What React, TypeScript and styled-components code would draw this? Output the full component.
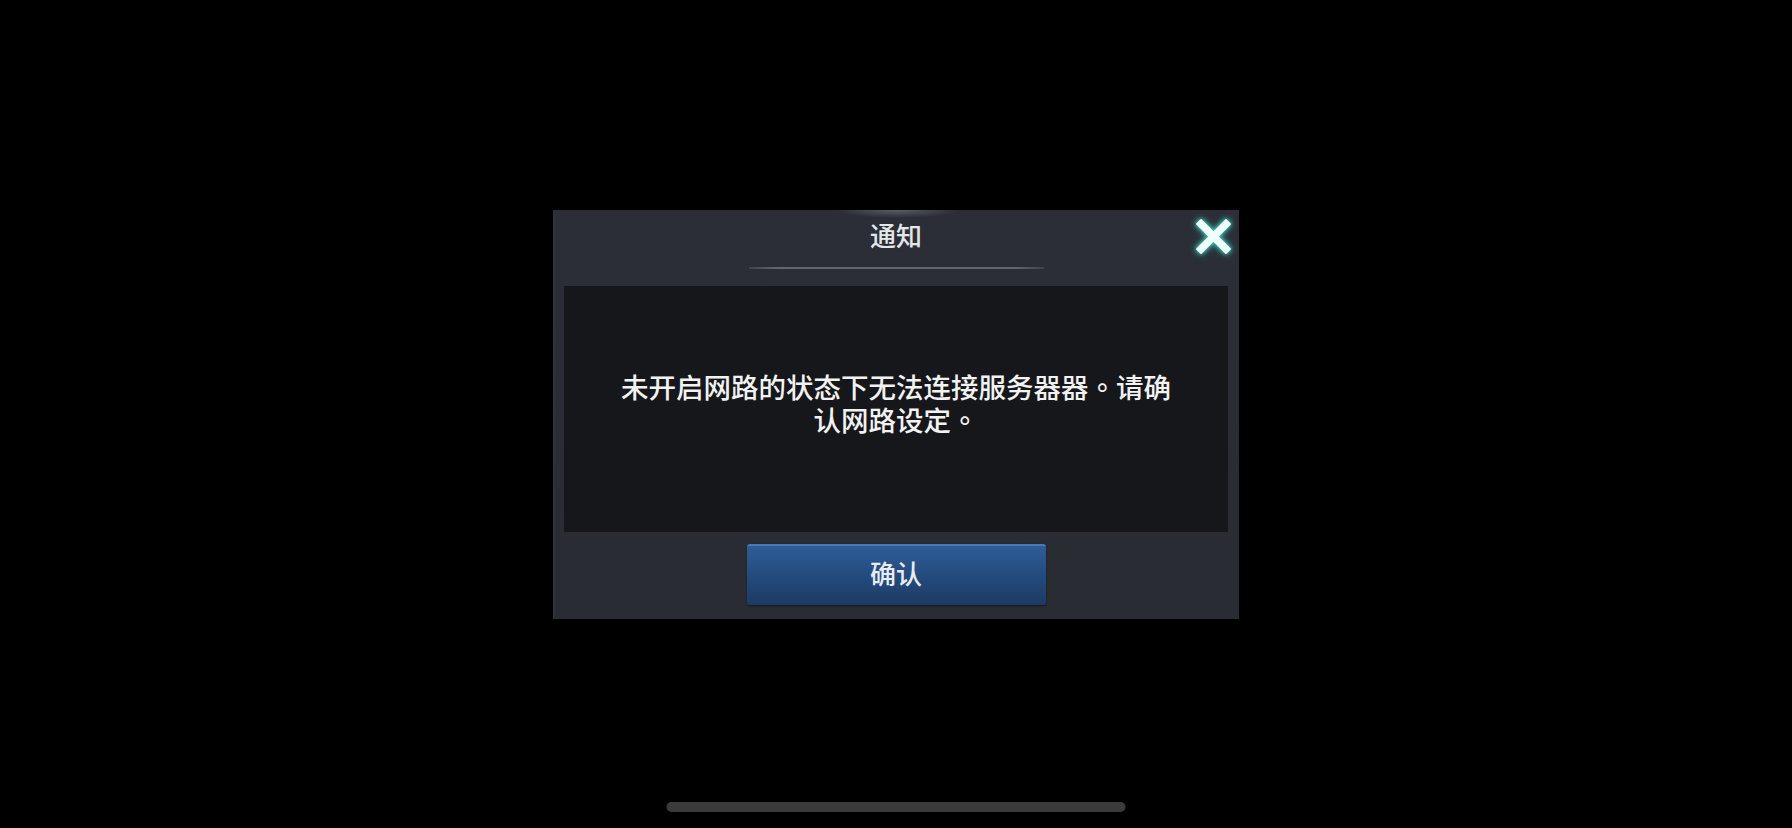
import React from "react";
import styled, { createGlobalStyle } from "styled-components";

const GlobalStyle = createGlobalStyle`
  html, body {
    margin: 0;
    padding: 0;
    background: #000;
  }
  body {
    font-family: "Noto Sans CJK SC", "Noto Sans", sans-serif;
    color: #eef0f2;
  }
`;

const Screen = styled.div`
  width: 100vw;
  height: 100vh;
  display: flex;
  align-items: center;
  justify-content: center;
  background: #000;
  overflow: hidden;
`;

const Dialog = styled.div`
  position: relative;
  width: 686px;
  height: 409px;
  box-sizing: border-box;
  padding: 0 11px 14px 9px;
  display: flex;
  flex-direction: column;
  background:
    radial-gradient(ellipse 60px 8px at 50% 0, rgba(200, 205, 215, 0.3), transparent),
    linear-gradient(180deg, #2b2e36 0%, #2a2c33 100%);
  border-left: 2px solid #30333c;
`;

const Header = styled.div`
  display: flex;
  flex-direction: column;
  align-items: center;
  padding-top: 10px;
  height: 76px;
  box-sizing: border-box;
`;

const Title = styled.div`
  font-size: 26px;
  line-height: 30px;
  font-weight: 500;
  color: #e4e7ea;
`;

const TitleRule = styled.div`
  width: 295px;
  height: 2px;
  margin-top: 17px;
  background: linear-gradient(90deg, #3f434b, #62666e 10%, #62666e 90%, #3f434b);
`;

const CloseButton = styled.button`
  position: absolute;
  top: 9px;
  right: 8px;
  width: 35px;
  height: 35px;
  padding: 0;
  border: none;
  background: none;
  cursor: pointer;
  filter: drop-shadow(0 0 2px #43d6c4) drop-shadow(0 0 3px rgba(60, 200, 190, 0.7));
`;

const Content = styled.div`
  height: 246px;
  box-sizing: border-box;
  padding-bottom: 12px;
  display: flex;
  align-items: center;
  justify-content: center;
  background: #16171b;
`;

const Message = styled.p`
  margin: 0;
  max-width: 566px;
  font-family: "Noto Sans CJK TC", "Noto Sans CJK SC", sans-serif;
  font-size: 27.5px;
  line-height: 33px;
  font-weight: 500;
  text-align: center;
  color: #f2f2f2;
`;

const Footer = styled.div`
  flex: 1;
  display: flex;
  align-items: flex-end;
  justify-content: center;
`;

const ConfirmButton = styled.button`
  width: 299px;
  height: 61px;
  padding: 0 0 5px;
  border: none;
  border-top: 2px solid #4a79b6;
  border-radius: 3px;
  background: linear-gradient(180deg, #2f5c96 0%, #244b7e 50%, #1c3b64 100%);
  box-shadow: 0 1px 2px rgba(0, 0, 0, 0.5);
  font-family: "Noto Sans CJK SC", "Noto Sans", sans-serif;
  font-size: 26px;
  font-weight: 500;
  color: #e8ecf0;
  cursor: pointer;
`;

const HomeIndicator = styled.div`
  position: absolute;
  left: 50%;
  bottom: 16px;
  transform: translateX(-50%);
  width: 459px;
  height: 10px;
  border-radius: 5px;
  background: #3b3b3b;
`;

const CloseIcon = () => (
  <svg width="35" height="35" viewBox="0 0 35 35">
    <path
      d="M5 5 L30 30 M30 5 L5 30"
      stroke="#effffb"
      strokeWidth="7.5"
      strokeLinecap="square"
    />
  </svg>
);

export default function App() {
  return (
    <>
      <GlobalStyle />
      <Screen>
        <Dialog>
          <Header>
            <Title>通知</Title>
            <TitleRule />
          </Header>
          <CloseButton aria-label="关闭">
            <CloseIcon />
          </CloseButton>
          <Content>
            <Message>未开启网路的状态下无法连接服务器器。请确认网路设定。</Message>
          </Content>
          <Footer>
            <ConfirmButton>确认</ConfirmButton>
          </Footer>
        </Dialog>
        <HomeIndicator />
      </Screen>
    </>
  );
}
